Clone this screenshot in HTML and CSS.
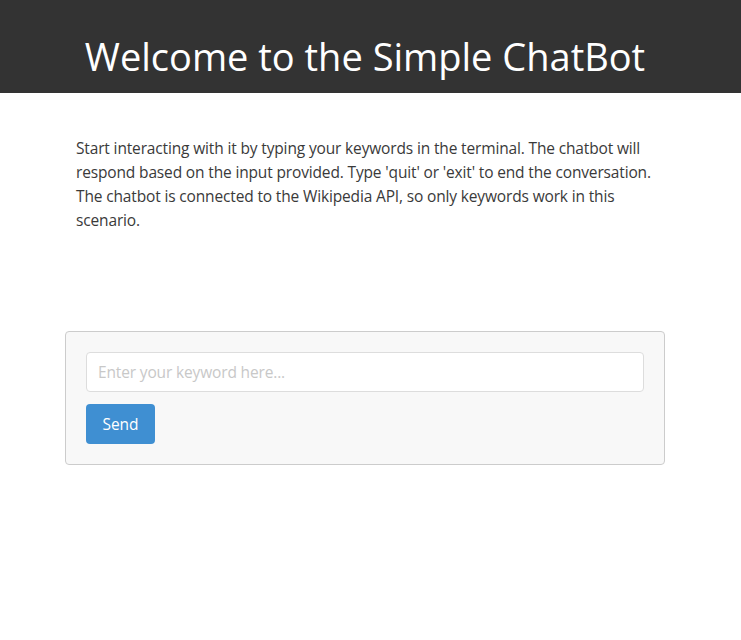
FILE: index.html
```html
<!DOCTYPE html>
<html lang="en">
<head>
<meta charset="utf-8">
<title>Simple ChatBot</title>
<link rel="stylesheet" href="styles.css">
</head>
<body>
<header class="header">
  <h1 class="title">Welcome to the Simple ChatBot</h1>
</header>
<main class="container">
  <p class="intro">Start interacting with it by typing your keywords in the terminal. The chatbot will respond based on the input provided. Type 'quit' or 'exit' to end the conversation. The chatbot is connected to the Wikipedia API, so only keywords work in this scenario.</p>
  <div class="chat-box">
    <input class="chat-input" type="text" placeholder="Enter your keyword here...">
    <button class="send-btn" type="button">Send</button>
  </div>
</main>
</body>
</html>
```
FILE: styles.css
```css
* { box-sizing: border-box; }
html, body { margin: 0; padding: 0; background: #fff; }
body {
  font-family: "Open Sans", "Noto Sans", sans-serif;
  color: #333;
}
.header {
  background: #333;
  height: 93px;
  display: flex;
  align-items: center;
  justify-content: center;
  padding-right: 11px;
}
.title {
  margin: 0;
  padding-top: 18px;
  color: #fff;
  font-weight: 400;
  font-size: 38px;
  line-height: 1;
}
.container {
  width: 600px;
  margin: 0 0 0 65px;
}
.intro {
  margin: 43px 11px 0 11px;
  font-size: 15.5px;
  line-height: 24px;
  color: #3a3a3a;
  letter-spacing: -0.15px;
}
.chat-box {
  margin-top: 99px;
  border: 1px solid #ccc;
  border-radius: 4px;
  background: #f8f8f8;
  padding: 20px;
  display: flex;
  flex-direction: column;
  align-items: flex-start;
  gap: 12px;
}
.chat-input {
  width: 100%;
  height: 40px;
  border: 1px solid #ddd;
  border-radius: 4px;
  background: #fff;
  padding: 0 11px;
  font-family: inherit;
  font-size: 15.5px;
  letter-spacing: -0.15px;
  color: #333;
}
.chat-input::placeholder { color: #c8c8c8; }
.send-btn {
  width: 69px;
  height: 40px;
  border: none;
  border-radius: 4px;
  background: #3f8fd2;
  color: #fff;
  font-family: inherit;
  font-size: 15.5px;
  padding: 0;
}
```
